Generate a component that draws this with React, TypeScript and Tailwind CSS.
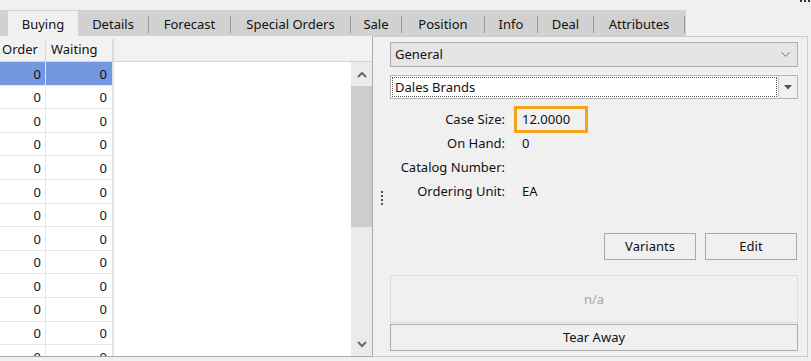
import { ChevronDown } from 'lucide-react'

const tabs = [
  { label: 'Details', w: 'w-[71px]' },
  { label: 'Forecast', w: 'w-[82px]' },
  { label: 'Special Orders', w: 'w-[120px]' },
  { label: 'Sale', w: 'w-[51px]' },
  { label: 'Position', w: 'w-[83px]' },
  { label: 'Info', w: 'w-[53px]' },
  { label: 'Deal', w: 'w-[56px]' },
  { label: 'Attributes', w: 'w-[91px]' },
]

const rows = Array.from({ length: 13 }, (_, i) => i)

const fields = [
  { label: 'Catalog Number:', value: '' },
  { label: 'Ordering Unit:', value: 'EA' },
]

function ScrollArrow({ up }: { up?: boolean }) {
  return (
    <svg width="10" height="7" viewBox="0 0 10 7" className="block">
      <polyline
        points={up ? '1,6 5,2 9,6' : '1,1 5,5 9,1'}
        fill="none"
        stroke="#6a6a6a"
        strokeWidth="2"
      />
    </svg>
  )
}

function TabStrip() {
  return (
    <div className="flex h-[26px] w-[686px] bg-[#d1d1d1] pl-[8px]">
      <div className="mt-[1px] flex h-[26px] w-[70px] items-center justify-center bg-[#f0f0f0] pt-[2px]">
        Buying
      </div>
      {tabs.map((t) => (
        <div key={t.label} className={`flex ${t.w} items-center`}>
          <span className="flex-1 pt-[3px] text-center">{t.label}</span>
          <span className="mt-[2px] h-[17px] w-px bg-[#9a9a9a]" />
        </div>
      ))}
    </div>
  )
}

function Grid() {
  return (
    <div className="flex w-[372px] flex-col border-b border-[#a9a9a9]">
      <div className="flex h-[26px] border-b border-[#d4d4d4] bg-[#f2f2f2] pt-[3px]">
        <div className="flex w-[46px] items-center justify-end border-r border-[#dadada] pr-[7px]">Order</div>
        <div className="flex w-[68px] items-center border-r-2 border-[#dadada] pl-[5px]">Waiting</div>
        <div className="flex-1" />
      </div>
      <div className="flex flex-1 overflow-hidden">
        <div className="flex w-[114px] flex-col border-r-2 border-[#e2e2e2] bg-white">
          {rows.map((i) => (
            <div key={i} className="flex h-[23.6px] shrink-0 border-b border-[#e6e6e6]">
              <div
                className={`flex w-[46px] items-center justify-end border-r border-[#e6e6e6] pr-[4px] pt-[2px] ${
                  i === 0 ? 'bg-[#7398df]' : ''
                }`}
              >
                0
              </div>
              <div
                className={`flex flex-1 items-center justify-end pr-[5px] pt-[2px] ${i === 0 ? 'bg-[#7398df]' : ''}`}
              >
                0
              </div>
            </div>
          ))}
        </div>
        <div className="flex-1 bg-white" />
        <div className="flex w-[21px] flex-col bg-[#ebebeb]">
          <div className="flex h-[24px] items-center justify-center">
            <ScrollArrow up />
          </div>
          <div className="h-[141px] bg-[#cdcdcd]" />
          <div className="flex-1" />
          <div className="flex h-[24px] items-center justify-center">
            <ScrollArrow />
          </div>
        </div>
      </div>
    </div>
  )
}

function DetailPanel() {
  return (
    <div className="flex w-[436px] border border-l-[#acacac] border-[#cdcdcd]">
      <div className="flex w-[17px] flex-col items-center justify-center gap-[2px] pt-[2px]">
        <span className="h-[2px] w-[2px] bg-[#505050]" />
        <span className="h-[2px] w-[2px] bg-[#505050]" />
        <span className="h-[2px] w-[2px] bg-[#505050]" />
        <span className="h-[2px] w-[2px] bg-[#505050]" />
      </div>
      <div className="flex flex-1 flex-col pr-[9px] pt-[5px] [&_span]:pt-[1px]">
        <div className="flex h-[25px] items-center justify-between border border-[#adadad] bg-[#e5e5e5] pl-[4px] pr-[4px]">
          <span>General</span>
          <ChevronDown size={15} strokeWidth={1.3} color="#555" />
        </div>
        <div className="mt-[8px] flex h-[24px] border border-[#b4b4b4] bg-white">
          <div className="m-[1px] flex flex-1 items-center border border-dotted border-[#555] pl-[2px]">
            <span>Dales Brands</span>
          </div>
          <div className="flex w-[19px] items-center justify-center border-l border-[#cfcfcf] bg-[#f0f0f0]">
            <svg width="8" height="5" viewBox="0 0 8 5">
              <polygon points="0,0 8,0 4,4.5" fill="#555" />
            </svg>
          </div>
        </div>
        <div className="mt-[8px] flex h-[24px] items-center">
          <span className="w-[115px] text-right">Case Size:</span>
          <div className="ml-[9px] flex h-[27px] w-[74px] items-center border-[3px] border-[#f4a41c] bg-[#f0f0f0] pl-[5px]">
            <span>12.0000</span>
          </div>
        </div>
        <div className="flex h-[24px] items-center">
          <span className="w-[115px] text-right">On Hand:</span>
          <span className="ml-[17px]">0</span>
        </div>
        {fields.map((f) => (
          <div key={f.label} className="flex h-[24px] items-center">
            <span className="w-[115px] text-right">{f.label}</span>
            <span className="ml-[17px]">{f.value}</span>
          </div>
        ))}
        <div className="mt-[30px] flex justify-end gap-[9px] pr-[1px]">
          <button type="button" className="flex h-[27px] w-[92px] items-center justify-center border border-[#a9a9a9] bg-[#f0f0f0]">
            <span>Variants</span>
          </button>
          <button type="button" className="flex h-[27px] w-[92px] items-center justify-center border border-[#a9a9a9] bg-[#f0f0f0]">
            <span>Edit</span>
          </button>
        </div>
        <div className="mt-[15px] flex h-[48px] items-center justify-center border border-[#dcdcdc] text-[#a6a6a6]">
          <span>n/a</span>
        </div>
        <button type="button" className="mt-[1px] flex h-[27px] items-center justify-center border border-[#adadad] bg-[#f0f0f0]">
          <span>Tear Away</span>
        </button>
      </div>
    </div>
  )
}

export default function App() {
  return (
    <div className="flex h-[361px] w-[811px] flex-col overflow-hidden bg-[#f0f0f0] font-['Noto_Sans',sans-serif] text-[13px] text-[#111]">
      <div className="flex h-[10px] justify-end gap-[2px] pr-[1px]">
        <span className="h-[2px] w-[2px] bg-[#333]" />
        <span className="h-[2px] w-[2px] bg-[#333]" />
        <span className="h-[2px] w-[2px] bg-[#333]" />
      </div>
      <TabStrip />
      <div className="flex h-[321px]">
        <Grid />
        <DetailPanel />
      </div>
    </div>
  )
}
